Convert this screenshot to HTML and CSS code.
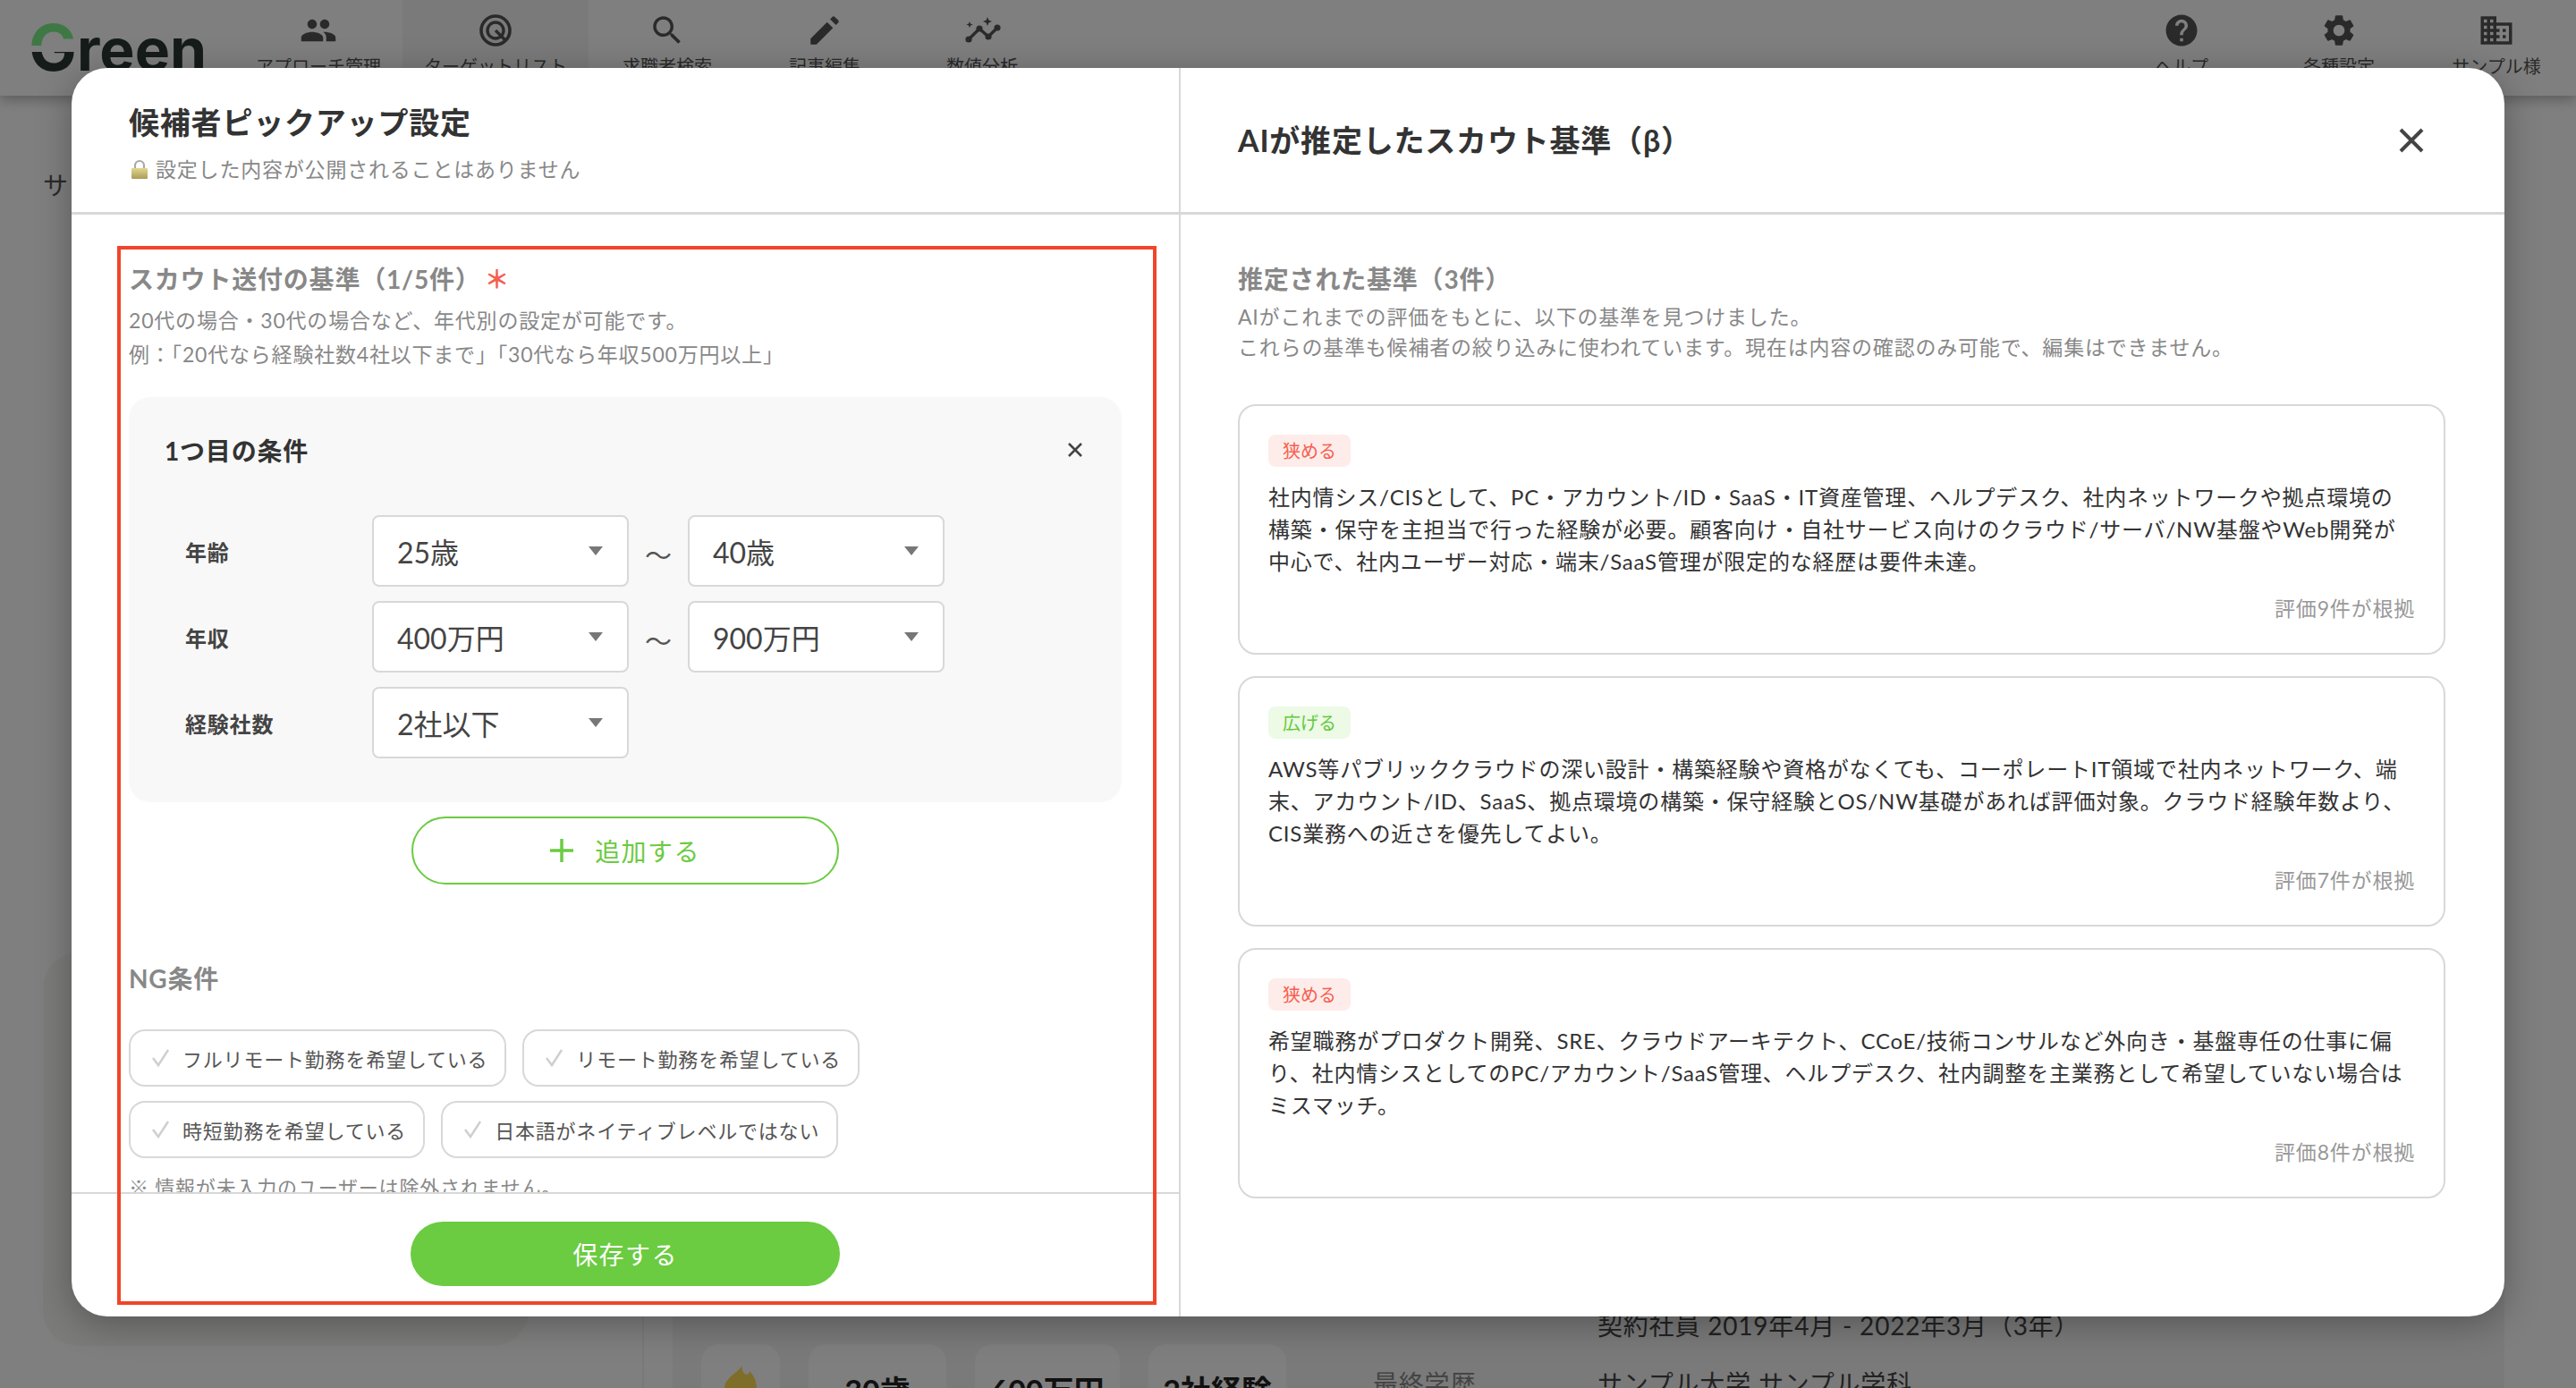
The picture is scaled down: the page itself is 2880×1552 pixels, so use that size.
FILE: index.html
```html
<!doctype html>
<html lang="ja">
<head>
  <meta charset="utf-8"/>
  <title>候補者ピックアップ設定</title>
  <link rel="stylesheet" href="styles.css">
</head>
<body>
  <!-- page behind the modal -->
  <header class="topbar">
    <div class="logo"><span class="logo-g">G</span>reen</div>
    <nav class="nav">
      <a class="nav-item">
        <svg class="nav-icon" viewBox="0 0 24 24"><path d="M16 11c1.66 0 2.99-1.34 2.99-3S17.66 5 16 5c-1.66 0-3 1.34-3 3s1.34 3 3 3zm-8 0c1.66 0 2.99-1.34 2.99-3S9.66 5 8 5C6.34 5 5 6.34 5 8s1.34 3 3 3zm0 2c-2.33 0-7 1.17-7 3.5V19h14v-2.5c0-2.33-4.67-3.5-7-3.5zm8 0c-.29 0-.62.02-.97.05 1.16.84 1.97 1.97 1.97 3.45V19h6v-2.5c0-2.33-4.67-3.5-7-3.5z"/></svg>
        <span>アプローチ管理</span>
      </a>
      <a class="nav-item active">
        <svg class="nav-icon" viewBox="0 0 42 42"><circle class="ln" cx="21" cy="21" r="16" stroke-width="3.6"/><circle class="ln" cx="21" cy="21" r="9" stroke-width="3.4"/><path class="ln" d="M21 21l11 11" stroke-width="3.4"/></svg>
        <span>ターゲットリスト</span>
      </a>
      <a class="nav-item">
        <svg class="nav-icon" viewBox="0 0 24 24"><path d="M15.5 14h-.79l-.28-.27C15.41 12.59 16 11.11 16 9.5 16 5.91 13.09 3 9.5 3S3 5.91 3 9.5 5.91 16 9.5 16c1.61 0 3.09-.59 4.23-1.57l.27.28v.79l5 4.99L20.49 19l-4.99-5zm-6 0C7.01 14 5 11.99 5 9.5S7.01 5 9.5 5 14 7.01 14 9.5 11.99 14 9.5 14z"/></svg>
        <span>求職者検索</span>
      </a>
      <a class="nav-item">
        <svg class="nav-icon" viewBox="0 0 24 24"><path d="M3 17.25V21h3.75L17.3 10.45 13.55 6.7 3 17.25zM20.71 7.04c.39-.39.39-1.02 0-1.41l-2.34-2.34c-.39-.39-1.02-.39-1.41 0l-1.5 1.5 3.75 3.75 1.5-1.5z"/></svg>
        <span>記事編集</span>
      </a>
      <a class="nav-item">
        <svg class="nav-icon" viewBox="0 0 42 42"><path class="ln" d="M6 31l12-12 10 9 10-10" stroke-width="3.4"/><circle cx="6" cy="31" r="3.6"/><circle cx="18" cy="19" r="3.6"/><circle cx="28" cy="28" r="3.6"/><circle cx="38" cy="18" r="3.6"/><path d="M27 6l1.4 3.6L32 11l-3.6 1.4L27 16l-1.4-3.6L22 11l3.6-1.4zM7 11l1 2.6 2.6 1-2.6 1L7 18.200l-1-2.600-2.600-1 2.600-1z"/></svg>
        <span>数値分析</span>
      </a>
    </nav>
    <div class="nav nav-right">
      <a class="nav-item">
        <svg class="nav-icon" viewBox="0 0 24 24"><path d="M12 2C6.48 2 2 6.48 2 12s4.48 10 10 10 10-4.48 10-10S17.52 2 12 2zm1 17h-2v-2h2v2zm2.070-7.750l-.9.920C13.450 12.900 13 13.500 13 15h-2v-.5c0-1.100.45-2.100 1.170-2.830l1.240-1.260c.37-.36.59-.86.59-1.410 0-1.100-.9-2-2-2s-2 .9-2 2H8c0-2.210 1.790-4 4-4s4 1.790 4 4c0 .88-.36 1.680-.93 2.250z"/></svg>
        <span>ヘルプ</span>
      </a>
      <a class="nav-item">
        <svg class="nav-icon" viewBox="0 0 24 24"><path d="M19.140 12.940c.04-.3.06-.61.06-.94 0-.32-.02-.64-.07-.94l2.030-1.580c.18-.14.23-.41.12-.61l-1.920-3.320c-.12-.22-.37-.29-.59-.22l-2.390.96c-.5-.38-1.030-.7-1.620-.94l-.36-2.540c-.04-.24-.24-.41-.48-.41h-3.840c-.24 0-.43.17-.47.41l-.36 2.540c-.59.24-1.130.57-1.620.94l-2.390-.96c-.22-.08-.47 0-.59.22L2.740 8.870c-.12.21-.08.47.12.61l2.030 1.580c-.05.3-.09.63-.09.94s.02.64.07.94l-2.030 1.580c-.18.14-.23.41-.12.61l1.920 3.320c.12.22.37.29.59.22l2.390-.96c.5.38 1.030.7 1.620.94l.36 2.540c.05.24.24.41.48.41h3.840c.24 0 .44-.17.47-.41l.36-2.540c.59-.24 1.130-.56 1.620-.94l2.390.96c.22.08.47 0 .59-.22l1.920-3.320c.12-.22.07-.47-.12-.61l-2.010-1.580zM12 15.600c-1.980 0-3.600-1.620-3.600-3.600s1.620-3.600 3.600-3.600 3.600 1.620 3.600 3.600-1.620 3.600-3.600 3.600z"/></svg>
        <span>各種設定</span>
      </a>
      <a class="nav-item">
        <svg class="nav-icon" viewBox="0 0 24 24"><path d="M12 7V3H2v18h20V7H12zM6 19H4v-2h2v2zm0-4H4v-2h2v2zm0-4H4V9h2v2zm0-4H4V5h2v2zm4 12H8v-2h2v2zm0-4H8v-2h2v2zm0-4H8V9h2v2zm0-4H8V5h2v2zm10 12h-8v-2h2v-2h-2v-2h2v-2h-2V9h8v10zm-2-8h-2v2h2v-2zm0 4h-2v2h2v-2z"/></svg>
        <span>サンプル様</span>
      </a>
    </div>
  </header>

  <div class="page">
    <aside class="page-side">
      <p class="side-text">サ</p>
      <div class="side-card"></div>
    </aside>
    <section class="page-main">
      <div class="stats">
        <div class="stat stat-icon">
          <svg class="flame" viewBox="0 0 36 50"><path d="M20 0c-1 6 1 9 5 10 2-1 3-2 3-4 5 5 8 12 8 20 0 12-8 22-18 22S0 38 0 26C0 14 12 10 20 0z"/></svg>
        </div>
        <div class="stat">30歳</div>
        <div class="stat stat-wide">600万円</div>
        <div class="stat">2社経験</div>
      </div>
      <dl class="profile">
        <div class="profile-row"><dt></dt><dd>契約社員 2019年4月 - 2022年3月（3年）</dd></div>
        <div class="profile-row"><dt>最終学歴</dt><dd>サンプル大学 サンプル学科</dd></div>
      </dl>
    </section>
  </div>

  <div class="overlay"></div>

  <!-- modal -->
  <div class="modal">
    <div class="col col-left">
      <div class="modal-head">
        <h2 class="modal-title">候補者ピックアップ設定</h2>
        <p class="modal-sub">
          <svg class="lock" viewBox="0 0 18 22">
            <defs><linearGradient id="lockGold" x1="0" y1="0" x2="0" y2="1"><stop offset="0" stop-color="#e3d690"/><stop offset="1" stop-color="#a89c58"/></linearGradient></defs>
            <path d="M4 11V7a5 5 0 0 1 10 0v4" fill="none" stroke="#a9a9a9" stroke-width="2.200"/>
            <rect x="0" y="10" width="18" height="12" rx="1" fill="url(#lockGold)"/>
          </svg>
          設定した内容が公開されることはありません
        </p>
      </div>

      <div class="left-body">
        <h3 class="sec-title">スカウト送付の基準（1/5件）<span class="req">＊</span></h3>
        <p class="desc desc-left">20代の場合・30代の場合など、年代別の設定が可能です。<br>例：「20代なら経験社数4社以下まで」「30代なら年収500万円以上」</p>

        <div class="cond">
          <div class="cond-head">
            <span class="cond-title">1つ目の条件</span>
            <svg class="cond-x" viewBox="0 0 18 18"><path d="M2 2l14 14M16 2L2 16"/></svg>
          </div>
          <div class="cond-row">
            <span class="cond-label">年齢</span>
            <div class="sel">25歳<i class="caret"></i></div>
            <span class="tilde">～</span>
            <div class="sel">40歳<i class="caret"></i></div>
          </div>
          <div class="cond-row">
            <span class="cond-label">年収</span>
            <div class="sel">400万円<i class="caret"></i></div>
            <span class="tilde">～</span>
            <div class="sel">900万円<i class="caret"></i></div>
          </div>
          <div class="cond-row">
            <span class="cond-label">経験社数</span>
            <div class="sel">2社以下<i class="caret"></i></div>
          </div>
        </div>

        <button class="add-btn">
          <svg class="plus" viewBox="0 0 26 26"><path d="M13 0v26M0 13h26"/></svg>
          追加する
        </button>

        <h3 class="sec-title ng-title">NG条件</h3>
        <div class="chips">
          <label class="chip"><svg class="check" viewBox="0 0 24 24"><path d="M3 12l6 8L20 3"/></svg>フルリモート勤務を希望している</label>
          <label class="chip"><svg class="check" viewBox="0 0 24 24"><path d="M3 12l6 8L20 3"/></svg>リモート勤務を希望している</label>
          <label class="chip"><svg class="check" viewBox="0 0 24 24"><path d="M3 12l6 8L20 3"/></svg>時短勤務を希望している</label>
          <label class="chip"><svg class="check" viewBox="0 0 24 24"><path d="M3 12l6 8L20 3"/></svg>日本語がネイティブレベルではない</label>
        </div>
        <p class="note">※ 情報が未入力のユーザーは除外されません。</p>
      </div>

      <div class="left-foot">
        <button class="save-btn">保存する</button>
      </div>
    </div>

    <div class="col col-right">
      <div class="modal-head modal-head-right">
        <h2 class="modal-title">AIが推定したスカウト基準（β）</h2>
        <svg class="close" viewBox="0 0 28 28"><path d="M2 2l24 24M26 2L2 26"/></svg>
      </div>
      <div class="right-body">
        <h3 class="sec-title">推定された基準（3件）</h3>
        <p class="desc desc-right">AIがこれまでの評価をもとに、以下の基準を見つけました。<br>これらの基準も候補者の絞り込みに使われています。現在は内容の確認のみ可能で、編集はできません。</p>

        <div class="rule-list">
          <article class="rule">
            <span class="tag tag-narrow">狭める</span>
            <p class="rule-text">社内情シス/CISとして、PC・アカウント/ID・SaaS・IT資産管理、ヘルプデスク、社内ネットワークや拠点環境の構築・保守を主担当で行った経験が必要。顧客向け・自社サービス向けのクラウド/サーバ/NW基盤やWeb開発が中心で、社内ユーザー対応・端末/SaaS管理が限定的な経歴は要件未達。</p>
            <p class="rule-foot">評価9件が根拠</p>
          </article>
          <article class="rule">
            <span class="tag tag-wide">広げる</span>
            <p class="rule-text">AWS等パブリッククラウドの深い設計・構築経験や資格がなくても、コーポレートIT領域で社内ネットワーク、端末、アカウント/ID、SaaS、拠点環境の構築・保守経験とOS/NW基礎があれば評価対象。クラウド経験年数より、CIS業務への近さを優先してよい。</p>
            <p class="rule-foot">評価7件が根拠</p>
          </article>
          <article class="rule">
            <span class="tag tag-narrow">狭める</span>
            <p class="rule-text">希望職務がプロダクト開発、SRE、クラウドアーキテクト、CCoE/技術コンサルなど外向き・基盤専任の仕事に偏り、社内情シスとしてのPC/アカウント/SaaS管理、ヘルプデスク、社内調整を主業務として希望していない場合はミスマッチ。</p>
            <p class="rule-foot">評価8件が根拠</p>
          </article>
        </div>
      </div>
    </div>
  </div>

  <!-- annotation frame -->
  <div class="red-frame"></div>
</body>
</html>
```

FILE: styles.css
```css
:root{
  --green:#6bcb41;
  --line:#d8d8d8;
  --gray:#888;
  --text:#333;
}
*{box-sizing:border-box;margin:0;padding:0}
html,body{height:100%;overflow:hidden}
body{
  position:relative;
  background:#fff;
  color:var(--text);
  font-family:Lato,"Noto Sans CJK JP",sans-serif;
  letter-spacing:.05em;
}

/* ---------- page behind ---------- */
.topbar{
  height:107px;
  display:flex;
  background:#fff;
  box-shadow:0 4px 14px rgba(0,0,0,.3);
  position:relative;
  overflow:hidden;
}
.logo{
  width:262px;
  padding:14px 0 0 32px;
  font-family:Inter,sans-serif;
  font-weight:700;
  font-size:66px;
  line-height:78px;
  letter-spacing:0;
  color:#2a3834;
}
.logo-g{
  font-size:72px;
  background:linear-gradient(#7cf08a 0 48%,transparent 48% 56%,#2a3834 56%);
  -webkit-background-clip:text;
  background-clip:text;
  color:transparent;
}
.nav{display:flex}
.nav-right{margin-left:auto;margin-right:1px}
.nav-item{
  min-width:176px;
  padding:13px 24px 0;
  display:flex;
  flex-direction:column;
  align-items:center;
  font-size:20px;
  line-height:28px;
  letter-spacing:0;
  color:#555;
  white-space:nowrap;
}
.nav-item.active{background:#f4f4f4}
.nav-icon{width:42px;height:42px;fill:#555;margin-bottom:5px}
.nav-icon .ln{fill:none;stroke:#555}

.page{display:flex;height:1445px}
.page-side{width:720px;border-right:2px solid #f2f2f2;padding:84px 0 0 48px;position:relative}
.side-text{font-size:28px;line-height:32px;color:#555}
.side-card{
  width:543px;
  height:440px;
  margin-top:842px;
  background:#f6f6f4;
  border-radius:40px;
}
.page-main{
  flex:1;
  margin:0 80px 0 32px;
  padding:1396px 0 0 32px;
  display:flex;
  background:#f4f4f4;
  overflow:hidden;
}
.stats{display:flex;gap:32px;height:200px;flex:none}
.stat{
  width:154px;
  height:120px;
  padding-top:30px;
  background:#fff;
  border-radius:20px;
  text-align:center;
  font-size:34px;
  line-height:44px;
  font-weight:700;
  letter-spacing:0;
  color:#222;
  white-space:nowrap;
}
.stat-icon{width:88px}
.stat-wide{width:162px}
.flame{width:36px;height:50px;fill:#ffdc55;margin-top:-6px}
.profile{margin:-54px 0 0 97px;font-size:28px;line-height:40px}
.profile-row{display:flex;height:65px;align-items:center}
.profile-row dt{width:251px;color:#888}
.profile-row dd{color:#444;white-space:nowrap}

.overlay{position:absolute;inset:0;background:rgba(0,0,0,.5)}

/* ---------- modal ---------- */
.modal{
  position:absolute;
  left:80px;
  top:76px;
  width:2720px;
  height:1396px;
  display:flex;
  background:#fff;
  border-radius:40px;
  box-shadow:0 8px 40px rgba(0,0,0,.3);
  overflow:hidden;
}
.col{display:flex;flex-direction:column}
.col-left{width:1240px;border-right:2px solid var(--line)}
.col-right{flex:1}

.modal-head{
  height:164px;
  padding:40px 64px 0;
  border-bottom:3px solid var(--line);
  flex:none;
}
.modal-head-right{
  display:flex;
  align-items:center;
  justify-content:space-between;
  padding:0 90px 0 64px;
}
.modal-title{font-size:34px;line-height:42px;font-weight:700;color:var(--text)}
.modal-sub{
  display:flex;
  align-items:center;
  gap:9px;
  margin-top:14px;
  font-size:23px;
  line-height:34px;
  color:var(--gray);
}
.lock{width:18px;height:22px;margin-left:3px}
.close{width:28px;height:28px}
.close path{stroke:#444;stroke-width:4;fill:none}

.sec-title{font-size:28px;line-height:40px;font-weight:700;color:var(--gray)}
.req{color:#f4604f;margin-left:4px}
.desc{font-size:23px;color:var(--gray)}
.desc-left{margin-top:7px;line-height:38px}
.desc-right{margin-top:5px;line-height:34px}

.left-body{
  height:1095px;
  padding:52px 64px 0;
  overflow:hidden;
  flex:none;
  border-bottom:2px solid var(--line);
}
.left-foot{flex:1;padding-top:31px;display:flex;justify-content:center;align-items:flex-start}

.cond{
  margin-top:29px;
  padding:39px 43px 49px 40px;
  background:#f8f8f8;
  border-radius:24px;
}
.cond-head{display:flex;align-items:center;justify-content:space-between;height:40px;margin-bottom:53px}
.cond-title{font-size:28px;font-weight:700;color:var(--text)}
.cond-x{width:18px;height:18px}
.cond-x path{stroke:#444;stroke-width:2.600;fill:none}
.cond-row{display:flex;align-items:center;padding-left:23px}
.cond-row + .cond-row{margin-top:16px}
.cond-label{width:209px;font-size:24px;font-weight:700;color:#444}
.sel{
  width:287px;
  height:80px;
  padding:0 27px 0 26px;
  display:flex;
  align-items:center;
  justify-content:space-between;
  background:#fff;
  border:2px solid var(--line);
  border-radius:8px;
  font-size:32px;
  letter-spacing:0;
  color:#444;
}
.caret{width:0;height:0;border:8px solid transparent;border-top:10px solid #777;border-bottom:0}
.tilde{width:66px;text-align:center;font-size:30px;letter-spacing:0;color:#555;padding-top:6px}

.add-btn,.save-btn{
  display:flex;
  align-items:center;
  justify-content:center;
  font-family:inherit;
  font-size:28px;
  letter-spacing:.05em;
  border-radius:40px;
  cursor:pointer;
}
.add-btn{
  width:478px;
  height:76px;
  margin:16px auto 0;
  gap:24px;
  background:#fff;
  border:2px solid var(--green);
  color:var(--green);
}
.plus{width:26px;height:26px}
.plus path{stroke:var(--green);stroke-width:3.500;fill:none}
.save-btn{
  width:480px;
  height:72px;
  background:var(--green);
  border:none;
  color:#fff;
}

.ng-title{margin-top:85px}
.chips{display:flex;flex-wrap:wrap;gap:16px 18px;margin-top:37px}
.chip{
  height:64px;
  padding:0 19px 0 22px;
  display:flex;
  align-items:center;
  gap:12px;
  border:2px solid var(--line);
  border-radius:18px;
  font-size:22px;
  color:#555;
  white-space:nowrap;
}
.check{width:24px;height:24px}
.check path{stroke:#cfcfcf;stroke-width:2.500;fill:none}
.note{margin-top:14px;font-size:22px;line-height:38px;color:var(--gray);white-space:nowrap}

.right-body{padding:52px 66px 0 64px}
.rule-list{margin-top:47px;display:flex;flex-direction:column;gap:24px}
.rule{
  height:280px;
  padding:32px;
  border:2px solid var(--line);
  border-radius:20px;
}
.tag{
  display:inline-block;
  height:36px;
  padding:0 16px;
  border-radius:8px;
  font-size:20px;
  line-height:36px;
  letter-spacing:0;
  vertical-align:top;
}
.tag-narrow{background:#feecea;color:#f4604f}
.tag-wide{background:#ecfae6;color:#62c93a}
.rule-text{margin-top:16px;font-size:24px;line-height:36px;color:var(--text)}
.rule-foot{margin-top:16px;font-size:23px;line-height:36px;text-align:right;color:#999}

.red-frame{
  position:absolute;
  left:131px;
  top:275px;
  width:1162px;
  height:1184px;
  border:4px solid #f0452a;
  pointer-events:none;
}
```
